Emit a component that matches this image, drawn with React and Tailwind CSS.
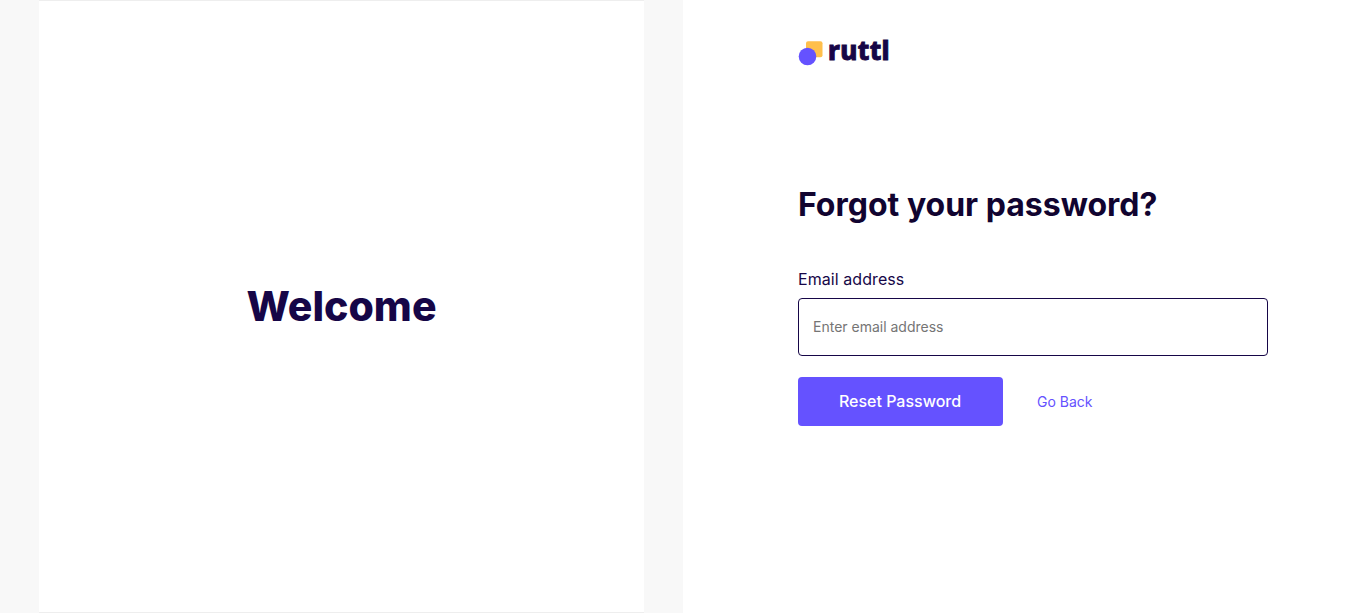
function Logo() {
  return (
    <div className="flex h-7 items-center gap-[5px]">
      <svg className="block h-7 w-[25px]" viewBox="0 0 25 28" aria-hidden="true">
        <rect x="8" y="3.2" width="16.5" height="16" rx="2" fill="#ffbf4b" />
        <circle cx="9.5" cy="18.5" r="8.8" fill="#6552ff" />
      </svg>
      <span className="-mt-1 font-['Noto_Sans',sans-serif] text-[26px] leading-9 font-extrabold tracking-[0.35px] text-[#160647] [-webkit-text-stroke:0.9px_#160647]">
        ruttl
      </span>
    </div>
  );
}

export default function App() {
  return (
    <main className="flex h-screen overflow-hidden bg-white font-['Inter',sans-serif] text-[#160647]">
      <section className="flex w-1/2 justify-center bg-[#f8f8f8]">
        <div className="flex w-[605px] items-center justify-center border-y border-[#eeeeee] bg-white">
          <h2 className="pb-px text-[41px] leading-none font-extrabold">Welcome</h2>
        </div>
      </section>
      <section className="w-1/2 pt-[38px] pr-[98px] pl-[115px]">
        <Logo />
        <h1 className="mt-[119px] text-[32px] leading-10 font-bold text-[#110430]">
          Forgot your password?
        </h1>
        <form className="mt-[42px]" onSubmit={(e) => e.preventDefault()}>
          <label htmlFor="email" className="block text-base leading-6 tracking-[0.07px]">
            Email address
          </label>
          <input
            id="email"
            type="email"
            placeholder="Enter email address"
            className="mt-[7px] block h-[58px] w-full rounded border border-[#160647] px-3.5 pb-0.5 text-sm outline-none placeholder:text-[#757575]"
          />
          <div className="mt-[21px] flex items-center">
            <button className="h-[49px] w-[205px] rounded bg-[#6552ff] pr-px pb-0.5 text-base font-medium text-white">
              Reset Password
            </button>
            <a href="#" className="ml-[34px] text-sm text-[#6552ff]">
              Go Back
            </a>
          </div>
        </form>
      </section>
    </main>
  );
}
